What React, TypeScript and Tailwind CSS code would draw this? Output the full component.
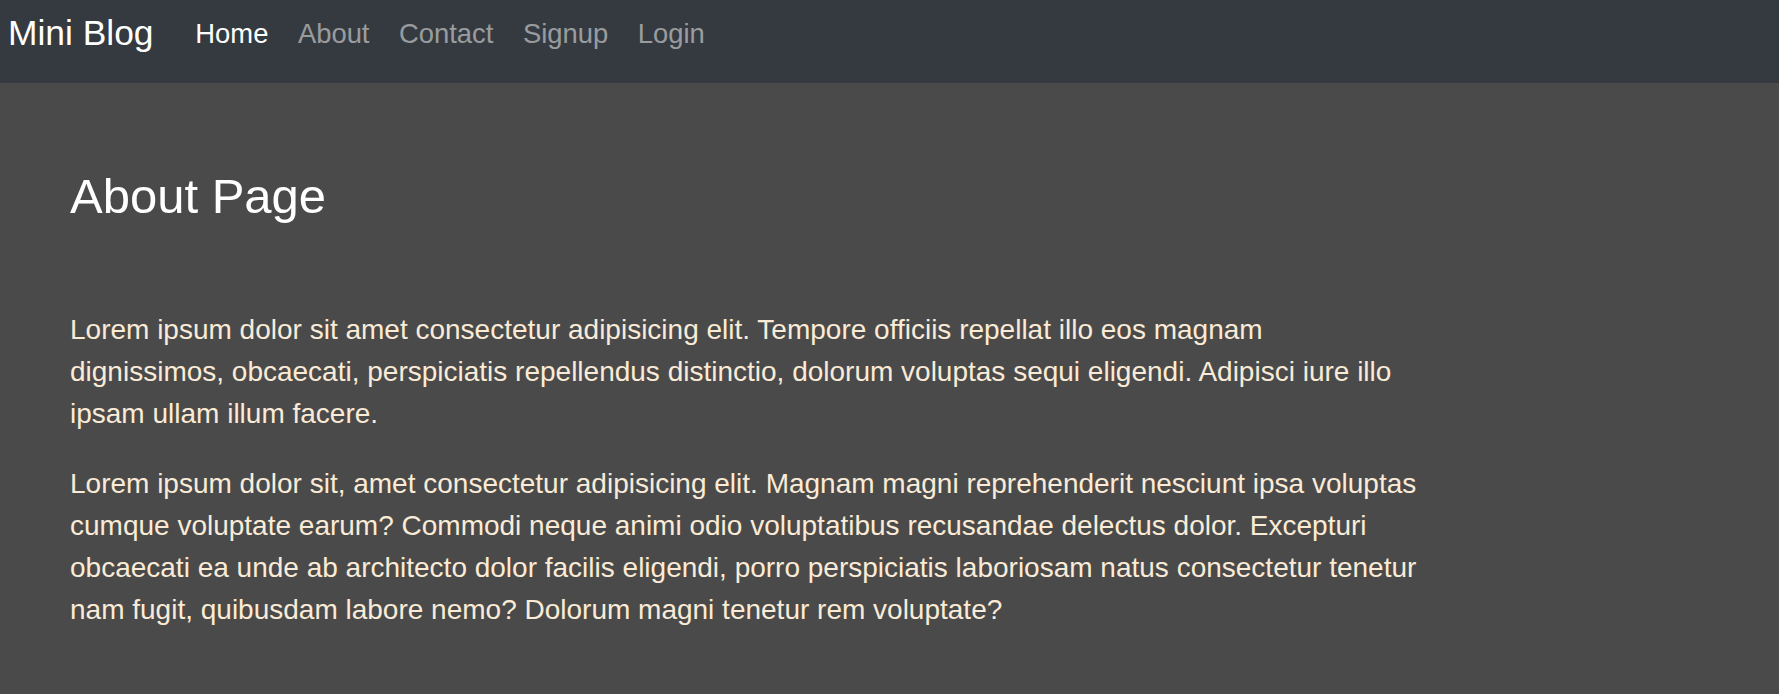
import React from 'react';

const links = [
  { label: 'Home', active: true },
  { label: 'About', active: false },
  { label: 'Contact', active: false },
  { label: 'Signup', active: false },
  { label: 'Login', active: false },
];

const Navbar: React.FC = () => (
  <nav className="h-[83px] bg-[#343a40] flex items-center pb-4 pl-2">
    <a href="#" className="text-[35.4px] leading-[1.5] text-white">Mini Blog</a>
    <ul className="flex ml-[27px]">
      {links.map((link) => (
        <li key={link.label}>
          <a
            href="#"
            className={`block px-[14.75px] text-[27.4px] leading-[1.5] ${link.active ? 'text-white' : 'text-white/50'}`}
          >
            {link.label}
          </a>
        </li>
      ))}
    </ul>
  </nav>
);

const App: React.FC = () => {
  return (
    <div className="min-h-[694px] bg-[#4a4a4a] font-['Liberation_Sans',Arial,sans-serif]">
      <Navbar />
      <main className="pl-[70px] pr-4">
        <h1 className="mt-[84px] text-[49px] leading-[1.2] text-white">About Page</h1>
        <div className="mt-[83px] max-w-[1350px] text-[28px] leading-[1.5] text-[#faebd7]">
          <p className="mb-[28px]">
            Lorem ipsum dolor sit amet consectetur adipisicing elit. Tempore officiis repellat illo eos magnam
            dignissimos, obcaecati, perspiciatis repellendus distinctio, dolorum voluptas sequi eligendi. Adipisci
            iure illo ipsam ullam illum facere.
          </p>
          <p>
            Lorem ipsum dolor sit, amet consectetur adipisicing elit. Magnam magni reprehenderit nesciunt ipsa
            voluptas cumque voluptate earum? Commodi neque animi odio voluptatibus recusandae delectus dolor.
            Excepturi obcaecati ea unde ab architecto dolor facilis eligendi, porro perspiciatis laboriosam natus
            consectetur tenetur nam fugit, quibusdam labore nemo? Dolorum magni tenetur rem voluptate?
          </p>
        </div>
      </main>
    </div>
  );
};

export default App;
